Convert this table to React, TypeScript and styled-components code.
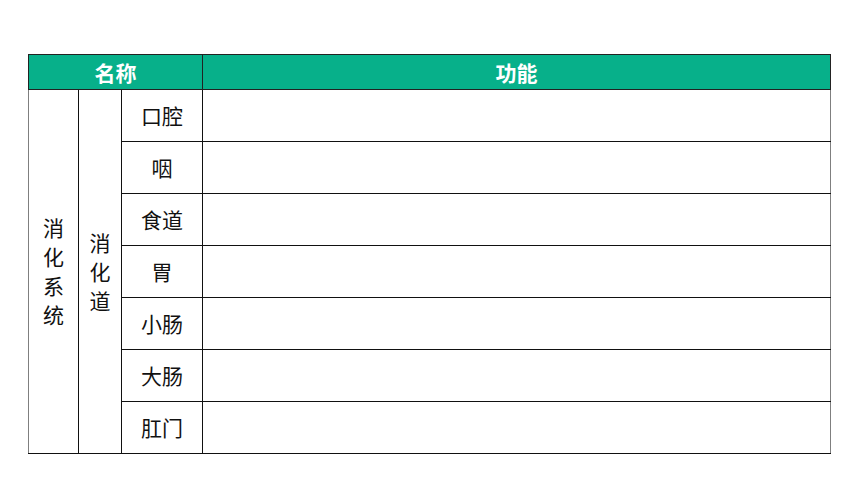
import React from "react"
import styled, { createGlobalStyle } from "styled-components"

const GlobalStyle = createGlobalStyle`
  html, body {
    margin: 0;
    padding: 0;
    background: #ffffff;
    font-family: "Noto Sans CJK SC", "Noto Sans", sans-serif;
  }
`

const Page = styled.div`
  width: 860px;
  height: 484px;
  padding: 54px 0 0 28px;
  box-sizing: border-box;
`

const Table = styled.table`
  border-collapse: collapse;
  table-layout: fixed;
  width: 803px;
  border: 1px solid #7f7f7f;
  border-top-color: #222;
`

const HeadCell = styled.th`
  background: #07b08a;
  color: #ffffff;
  font-size: 21px;
  font-weight: 700;
  height: 34px;
  padding: 0;
  border: 1px solid #222;
  line-height: 1;
`

const Cell = styled.td<{ $edge?: boolean }>`
  height: 52px;
  padding: 0 0 1px;
  box-sizing: border-box;
  border: 1px solid #111;
  ${(p) => (p.$edge ? "border-left-color: #7f7f7f;" : "")}
  font-size: 21px;
  color: #111;
  text-align: center;
  vertical-align: middle;
`

const Blank = styled.td`
  padding: 0;
  border: 1px solid #111;
  border-right-color: #7f7f7f;
`

const Stack = styled.div`
  display: flex;
  flex-direction: column;
  align-items: center;
  font-size: 21px;
  line-height: 29px;
  color: #111;
`

const organs = ["口腔", "咽", "食道", "胃", "小肠", "大肠", "肛门"]

const Vertical = ({ text }: { text: string }) => (
  <Stack>
    {text.split("").map((c, i) => (
      <span key={i}>{c}</span>
    ))}
  </Stack>
)

export default function App() {
  return (
    <>
      <GlobalStyle />
      <Page>
        <Table>
          <colgroup>
            <col style={{ width: 50 }} />
            <col style={{ width: 43 }} />
            <col style={{ width: 81 }} />
            <col />
          </colgroup>
          <thead>
            <tr>
              <HeadCell colSpan={3}>名称</HeadCell>
              <HeadCell>功能</HeadCell>
            </tr>
          </thead>
          <tbody>
            {organs.map((o, i) => (
              <tr key={o}>
                {i === 0 && (
                  <>
                    <Cell $edge rowSpan={7}>
                      <Vertical text="消化系统" />
                    </Cell>
                    <Cell rowSpan={7}>
                      <Vertical text="消化道" />
                    </Cell>
                  </>
                )}
                <Cell>{o}</Cell>
                <Blank />
              </tr>
            ))}
          </tbody>
        </Table>
      </Page>
    </>
  )
}
